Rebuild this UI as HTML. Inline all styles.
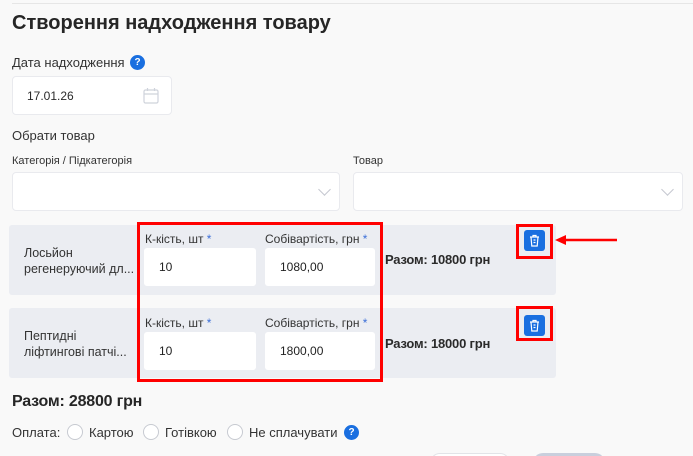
<!DOCTYPE html>
<html><head><meta charset="utf-8"><style>
*{box-sizing:border-box;margin:0;padding:0}
html,body{width:693px;height:456px;overflow:hidden}
body{background:#f9f9f9;font-family:"Liberation Sans","DejaVu Sans",sans-serif;color:#2a2a2a;position:relative}
.a{position:absolute}
.box{position:absolute;background:#fff;border:1px solid #e9eaee;border-radius:4px}
.q{position:absolute;width:15px;height:15px;border-radius:50%;background:#1a6fe0;color:#fff;font-size:10px;font-weight:bold;text-align:center;line-height:15px}
.row{position:absolute;left:9px;width:547px;height:70px;background:#ebedf2;border-radius:3px}
.lbl{position:absolute;font-size:12px;color:#333}
.lbl b{color:#3b6fd8;font-weight:normal}
.inp{position:absolute;background:#fff;border-radius:3px;font-size:12px;color:#222;line-height:38px;padding-left:15px}
.chev{position:absolute;width:9px;height:9px;border-right:1px solid #c5c8d0;border-bottom:1px solid #c5c8d0;transform:rotate(45deg)}
.tr{position:absolute;width:21px;height:21px;background:#1a6fe0;border-radius:3px}
.rb{position:absolute;border:3px solid #f00}
.rad{position:absolute;width:16px;height:16px;border:1px solid #c7cad1;border-radius:50%;background:#fff;top:424px}
.t13{position:absolute;font-size:13px;color:#333}
</style></head><body>
<div class="a" style="left:12px;top:3px;width:681px;height:1px;background:#e6e6e6"></div>
<div class="a" style="left:12px;top:12px;font-size:20px;font-weight:bold;color:#262626">Створення надходження товару</div>
<div class="t13" style="left:12px;top:55px">Дата надходження</div>
<div class="q" style="left:130px;top:55px">?</div>
<div class="box" style="left:12px;top:76px;width:160px;height:39px"><span class="a" style="left:14px;top:12px;font-size:12px">17.01.26</span>
<svg class="a" style="left:130px;top:10px" width="16" height="17" viewBox="0 0 16 17" fill="none" stroke="#cfd3db" stroke-width="1.2"><rect x="1" y="3" width="14" height="13" rx="1.5"/><path d="M1 7h14M4.5 1v3M11.5 1v3"/></svg></div>
<div class="t13" style="left:12px;top:128px">Обрати товар</div>
<div class="lbl" style="left:12px;top:155px;font-size:11px">Категорія / Підкатегорія</div>
<div class="lbl" style="left:353px;top:155px;font-size:11px">Товар</div>
<div class="box" style="left:12px;top:172px;width:328px;height:39px"><div class="chev" style="left:307px;top:12px"></div></div>
<div class="box" style="left:353px;top:172px;width:330px;height:39px"><div class="chev" style="left:309px;top:12px"></div></div>

<div class="row" style="top:225px"></div>
<div class="row" style="top:308px"></div>
<div class="a" style="left:24px;top:245px;font-size:12.5px;line-height:16px;color:#333">Лосьйон<br>регенеруючий дл...</div>
<div class="a" style="left:24px;top:328px;font-size:12.5px;line-height:16px;color:#333">Пептидні<br>ліфтингові патчі...</div>
<div class="lbl" style="left:145px;top:232px">К-кість, шт <b>*</b></div>
<div class="lbl" style="left:265px;top:232px">Собівартість, грн <b>*</b></div>
<div class="inp" style="left:144px;top:248px;width:112px;height:38px">10</div>
<div class="inp" style="left:265px;top:248px;width:110px;height:38px">1080,00</div>
<div class="lbl" style="left:145px;top:316px">К-кість, шт <b>*</b></div>
<div class="lbl" style="left:265px;top:316px">Собівартість, грн <b>*</b></div>
<div class="inp" style="left:144px;top:332px;width:112px;height:38px">10</div>
<div class="inp" style="left:265px;top:332px;width:110px;height:38px">1800,00</div>
<div class="a" style="left:385px;top:252px;font-size:13px;font-weight:bold;letter-spacing:-0.2px">Разом: 10800 грн</div>
<div class="a" style="left:385px;top:336px;font-size:13px;font-weight:bold;letter-spacing:-0.2px">Разом: 18000 грн</div>
<div class="rb" style="left:137px;top:222px;width:246px;height:160px"></div>

<div class="tr" style="left:524px;top:230px"><svg class="a" style="left:5px;top:4px" width="11" height="13" viewBox="0 0 11 13" fill="none" stroke="#fff" stroke-width="1.2"><path d="M1 3h9M4 3V1.5h3V3M2 3l.8 9h5.4L9 3M4.5 6h2M4.5 8.5h2"/></svg></div>
<div class="rb" style="left:516px;top:224px;width:37px;height:35px"></div>
<div class="tr" style="left:524px;top:315px"><svg class="a" style="left:5px;top:4px" width="11" height="13" viewBox="0 0 11 13" fill="none" stroke="#fff" stroke-width="1.2"><path d="M1 3h9M4 3V1.5h3V3M2 3l.8 9h5.4L9 3M4.5 6h2M4.5 8.5h2"/></svg></div>
<div class="rb" style="left:516px;top:306px;width:37px;height:35px"></div>
<svg class="a" style="left:553px;top:234px" width="66" height="12"><path d="M12 6H64" stroke="#f00" stroke-width="2.5"/><path d="M2 6L13 1V11Z" fill="#f00"/></svg>

<div class="a" style="left:12px;top:393px;font-size:16px;font-weight:bold;color:#262626;letter-spacing:-0.2px">Разом: 28800 грн</div>
<div class="t13" style="left:12px;top:425px">Оплата:</div>
<div class="rad" style="left:67px"></div><div class="t13" style="left:89px;top:425px">Картою</div>
<div class="rad" style="left:143px"></div><div class="t13" style="left:165px;top:425px">Готівкою</div>
<div class="rad" style="left:227px"></div><div class="t13" style="left:249px;top:425px">Не сплачувати</div>
<div class="q" style="left:344px;top:425px">?</div>
<div class="a" style="left:430px;top:453px;width:80px;height:20px;border:1px solid #e2e4e8;border-radius:10px;background:#fff"></div>
<div class="a" style="left:533px;top:453px;width:72px;height:20px;border-radius:10px;background:#c9cfdd"></div>
</body></html>
